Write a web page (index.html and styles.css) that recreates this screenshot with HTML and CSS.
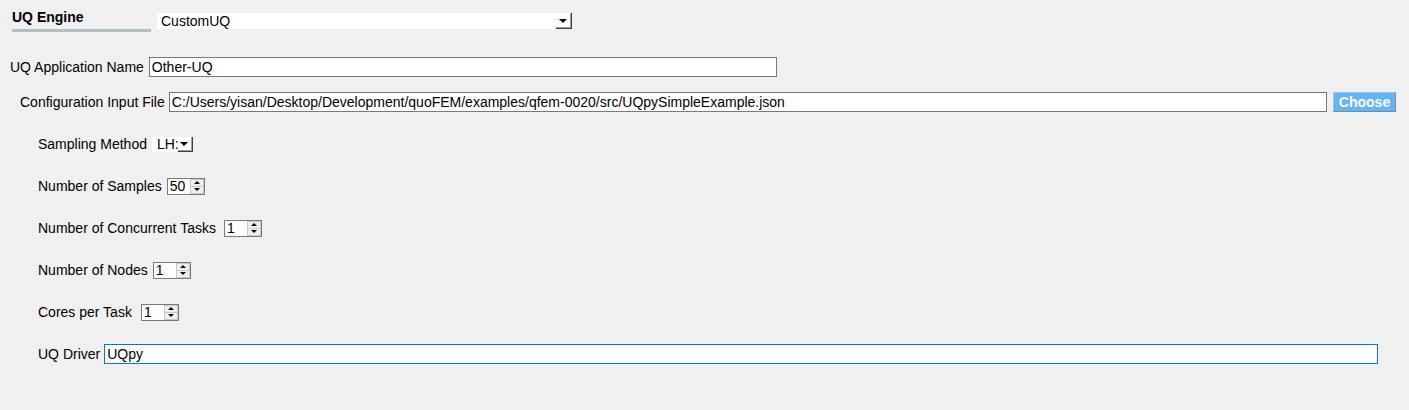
FILE: index.html
```html
<!DOCTYPE html>
<html>
<head>
<meta charset="utf-8">
<title>UQ Engine</title>
<link rel="stylesheet" href="styles.css">
</head>
<body>
<div class="page">
  <div class="header">
    <div class="engine-title">UQ Engine</div>
    <div class="combo combo-engine">
      <span class="combo-text">CustomUQ</span>
      <span class="combo-btn"><span class="tri-down"></span></span>
    </div>
  </div>

  <div class="row row-app">
    <label class="lbl">UQ Application Name</label>
    <input class="field field-app" type="text" value="Other-UQ">
  </div>

  <div class="row row-config">
    <label class="lbl">Configuration Input File</label>
    <input class="field field-grow" type="text" value="C:/Users/yisan/Desktop/Development/quoFEM/examples/qfem-0020/src/UQpySimpleExample.json">
    <button class="choose">Choose</button>
  </div>

  <div class="params">
    <div class="prow">
      <label class="lbl">Sampling Method</label>
      <div class="combo combo-small">
        <span class="combo-text">LH:</span>
        <span class="combo-btn"><span class="tri-down"></span></span>
      </div>
    </div>
    <div class="prow">
      <label class="lbl">Number of Samples</label>
      <div class="spin">
        <span class="spin-val">50</span>
        <span class="spin-btns"><span class="spin-half"><span class="tri-up"></span></span><span class="spin-half"><span class="tri-dn"></span></span></span>
      </div>
    </div>
    <div class="prow">
      <label class="lbl lbl-conc">Number of Concurrent Tasks</label>
      <div class="spin">
        <span class="spin-val">1</span>
        <span class="spin-btns"><span class="spin-half"><span class="tri-up"></span></span><span class="spin-half"><span class="tri-dn"></span></span></span>
      </div>
    </div>
    <div class="prow">
      <label class="lbl">Number of Nodes</label>
      <div class="spin">
        <span class="spin-val">1</span>
        <span class="spin-btns"><span class="spin-half"><span class="tri-up"></span></span><span class="spin-half"><span class="tri-dn"></span></span></span>
      </div>
    </div>
    <div class="prow">
      <label class="lbl lbl-cores">Cores per Task</label>
      <div class="spin">
        <span class="spin-val">1</span>
        <span class="spin-btns"><span class="spin-half"><span class="tri-up"></span></span><span class="spin-half"><span class="tri-dn"></span></span></span>
      </div>
    </div>
    <div class="prow prow-driver">
      <label class="lbl">UQ Driver</label>
      <input class="field field-grow field-focus" type="text" value="UQpy">
    </div>
  </div>
</div>
</body>
</html>
```

FILE: styles.css
```css
html, body {
  margin: 0;
  padding: 0;
}
body {
  background: #f0f0f0;
  font-family: "Liberation Sans", Arial, sans-serif;
  font-size: 14px;
  color: #000;
  width: 1409px;
  height: 410px;
  overflow: hidden;
}

.header {
  display: flex;
  align-items: flex-start;
  padding-left: 12px;
}
.engine-title {
  width: 139px;
  box-sizing: border-box;
  padding-top: 9px;
  padding-bottom: 4px;
  line-height: 16px;
  font-weight: bold;
  border-bottom: 3px solid #b0bec5;
}

.combo {
  display: flex;
  background: #fff;
  box-sizing: border-box;
}
.combo-engine {
  margin-left: 6px;
  margin-top: 13px;
  width: 415px;
  height: 16px;
}
.combo-text {
  flex: 1;
  padding-left: 4px;
  line-height: 16px;
  overflow: hidden;
  white-space: nowrap;
}
.combo-btn {
  width: 16px;
  box-sizing: border-box;
  border-right: 1px solid #404040;
  border-bottom: 1px solid #404040;
  box-shadow: inset -1px -1px 0 #a0a0a0;
  display: flex;
  align-items: center;
  justify-content: center;
  padding-right: 1px;
}
.tri-down {
  width: 0;
  height: 0;
  border-left: 4px solid transparent;
  border-right: 4px solid transparent;
  border-top: 4px solid #000;
}

.row {
  display: flex;
  align-items: center;
}
.row-app {
  margin-top: 25px;
  padding-left: 10px;
  gap: 5px;
}
.row-config {
  margin-top: 15px;
  padding-left: 20px;
  padding-right: 13px;
  gap: 4px;
}
.lbl {
  white-space: nowrap;
}
.lbl-conc {
  min-width: 181px;
}
.lbl-cores {
  min-width: 98px;
}
.field {
  height: 20px;
  box-sizing: border-box;
  border: 1px solid #7a7a7a;
  background: #fff;
  font-family: inherit;
  font-size: 14px;
  color: #000;
  padding: 0 2px;
  margin: 0;
  outline: none;
}
.field-app {
  width: 628px;
}
.field-grow {
  flex: 1;
  min-width: 0;
}
.field-focus {
  border-color: #0078d7;
}
.choose {
  margin-left: 2px;
  width: 63px;
  height: 20px;
  padding: 0;
  background: #64b5f6;
  color: #fff;
  font-family: "Liberation Sans", Arial, sans-serif;
  font-size: 14px;
  font-weight: bold;
  border: 1px solid;
  border-color: #90caf9 #6f8ea8 #6f8ea8 #90caf9;
}

.params {
  margin-top: 21px;
  padding-left: 38px;
  padding-right: 31px;
  display: flex;
  flex-direction: column;
  gap: 20px;
}
.prow {
  display: flex;
  align-items: center;
  height: 22px;
  gap: 5px;
}
.prow-driver {
  gap: 4px;
}
.combo-small {
  width: 41px;
  height: 15px;
}
.combo-small .combo-text {
  line-height: 15px;
  padding-left: 5px;
}
.combo-small .combo-btn {
  width: 15px;
}

.spin {
  display: flex;
  width: 38px;
  height: 17px;
  box-sizing: border-box;
  border: 1px solid #7a7a7a;
  background: #fff;
}
.spin-val {
  flex: 1;
  padding-left: 2px;
  line-height: 15px;
}
.spin-btns {
  width: 14px;
  display: flex;
  flex-direction: column;
  box-sizing: border-box;
  border: 1px solid #c8c8c8;
  background: #efefef;
}
.spin-half {
  flex: 1;
  display: flex;
  align-items: center;
  justify-content: center;
}
.spin-half + .spin-half {
  border-top: 1px solid #c8c8c8;
}
.tri-up {
  width: 0;
  height: 0;
  border-left: 3px solid transparent;
  border-right: 3px solid transparent;
  border-bottom: 3px solid #000;
}
.tri-dn {
  width: 0;
  height: 0;
  border-left: 3px solid transparent;
  border-right: 3px solid transparent;
  border-top: 3px solid #000;
}
```
